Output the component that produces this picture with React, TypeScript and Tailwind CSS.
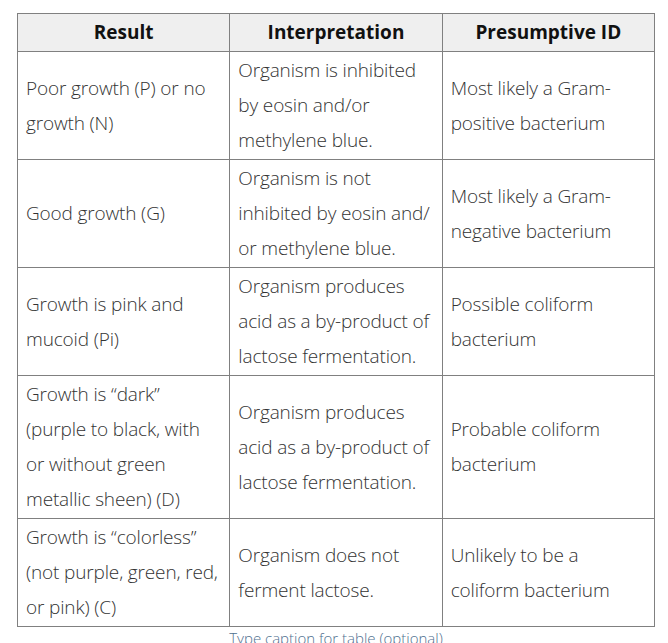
import React from "react";

const ROWS = [
  {
    result: "Poor growth (P) or no growth (N)",
    interp: "Organism is inhibited by eosin and/or methylene blue.",
    id: "Most likely a Gram-positive bacterium",
  },
  {
    result: "Good growth (G)",
    interp: "Organism is not inhibited by eosin and/ or methylene blue.",
    id: "Most likely a Gram-negative bacterium",
  },
  {
    result: "Growth is pink and mucoid (Pi)",
    interp: "Organism produces acid as a by-product of lactose fermentation.",
    id: "Possible coliform bacterium",
  },
  {
    result: "Growth is \u201cdark\u201d (purple to black, with or without green metallic sheen) (D)",
    interp: "Organism produces acid as a by-product of lactose fermentation.",
    id: "Probable coliform bacterium",
  },
  {
    result: "Growth is \u201ccolorless\u201d (not purple, green, red, or pink) (C)",
    interp: "Organism does not ferment lactose.",
    id: "Unlikely to be a coliform bacterium",
  },
];

const cell = "border border-[#808080] px-2 py-px align-middle";

export default function App() {
  return (
    <div className="w-[668px] h-[643px] overflow-hidden bg-white pt-[13px] pl-[17px] font-['Open_Sans',sans-serif] text-[#333]">
      <table className="w-[638px] table-fixed border-collapse text-[19px] font-light leading-[35px]">
        <thead>
          <tr className="bg-[#efefef] h-[38px]">
            <th className={`${cell} font-bold text-[#111] text-center`}>Result</th>
            <th className={`${cell} font-bold text-[#111] text-center`}>Interpretation</th>
            <th className={`${cell} font-bold text-[#111] text-center`}>Presumptive ID</th>
          </tr>
        </thead>
        <tbody className="tracking-[-0.15px]">
          {ROWS.map((r, i) => (
            <tr key={i}>
              <td className={cell}>{r.result}</td>
              <td className={cell}>{r.interp}</td>
              <td className={cell}>{r.id}</td>
            </tr>
          ))}
        </tbody>
      </table>
      <p className="w-[638px] text-center text-[15px] font-light leading-[22px] text-[#4f6f8f]">
        Type caption for table (optional)
      </p>
    </div>
  );
}
